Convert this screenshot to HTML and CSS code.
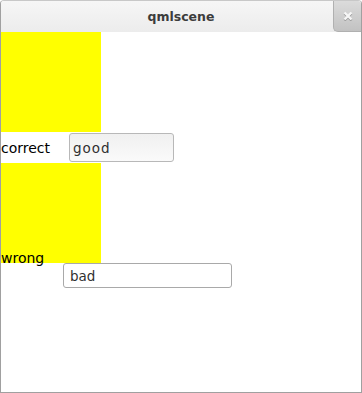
FILE: index.html
```html
<!DOCTYPE html>
<html lang="en">
<head>
    <meta charset="UTF-8">
    <title>qmlscene</title>
    <link rel="stylesheet" href="styles.css">
</head>
<body>
    <div class="window">
        <div class="titlebar">
            <span class="title">qmlscene</span>
            <div class="close">
                <svg width="10" height="10" viewBox="0 0 10 10">
                    <path d="M1.5 1.5 L8.5 8.5 M8.5 1.5 L1.5 8.5" stroke="#9a9a9a" stroke-width="2.4" transform="translate(0 1)"/>
                    <path d="M1.5 1.5 L8.5 8.5 M8.5 1.5 L1.5 8.5" stroke="#f6f6f6" stroke-width="2.4"/>
                </svg>
            </div>
        </div>
        <div class="scene">
            <div class="box"></div>
            <div class="row">
                <span class="label">correct</span>
                <input class="field good" type="text" value="good">
            </div>
            <div class="box">
                <span class="label overlay">wrong</span>
            </div>
            <input class="field bad" type="text" value="bad">
        </div>
    </div>
</body>
</html>
```

FILE: styles.css
```css
body {
    margin: 0;
    background: #fff;
    font-family: "DejaVu Sans", sans-serif;
}
.window {
    width: 362px;
    height: 393px;
    box-sizing: border-box;
    border: 1px solid #a0a0a0;
    border-top-color: #c8c8c8;
    border-radius: 4px 4px 0 0;
    background: #fff;
    overflow: hidden;
}
.titlebar {
    position: relative;
    height: 31px;
    background: linear-gradient(#f6f6f6, #ececec);
    display: flex;
    align-items: center;
    justify-content: center;
}
.title {
    font-weight: bold;
    font-size: 12.5px;
    color: #3c3c3c;
}
.close {
    position: absolute;
    right: 0;
    top: -1px;
    width: 27px;
    height: 31px;
    background: linear-gradient(#dcdcdc, #c2c2c2);
    border-left: 1px solid #b0b0b0;
    border-bottom: 1px solid #b0b0b0;
    border-radius: 0 0 0 5px;
    display: flex;
    align-items: center;
    justify-content: center;
}
.scene {
    display: flex;
    flex-direction: column;
    align-items: flex-start;
}
.box {
    position: relative;
    width: 100px;
    height: 100px;
    background: #ffff00;
}
.row {
    height: 31px;
    display: flex;
    align-items: center;
}
.label {
    font-size: 14px;
    color: #000;
    width: 68px;
}
.overlay {
    position: absolute;
    left: 0;
    bottom: -4px;
    line-height: 17px;
}
.field {
    box-sizing: border-box;
    margin: 0;
    border: 1px solid #a9a9a9;
    border-radius: 3px;
    font-family: "DejaVu Sans", sans-serif;
    font-size: 13.5px;
    color: #303030;
    outline: none;
}
.good {
    width: 105px;
    height: 29px;
    padding: 0 3px;
    letter-spacing: 1px;
    background: linear-gradient(#f0f0f0, #fafafa);
    border-color: #b8b8b8;
}
.bad {
    width: 169px;
    height: 25px;
    margin-left: 62px;
    padding: 0 6px;
    background: #fff;
}
```
